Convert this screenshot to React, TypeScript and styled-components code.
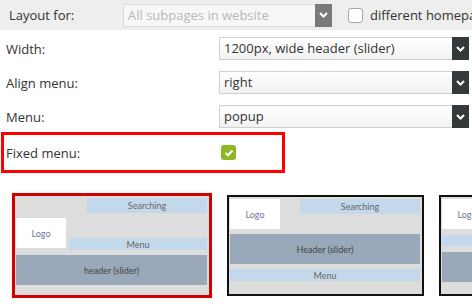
import React from "react";
import styled, { createGlobalStyle } from "styled-components";

const Global = createGlobalStyle`
  html, body { margin: 0; padding: 0; background: #fff; overflow: hidden; }
  body { font-family: "Open Sans", "Liberation Sans", sans-serif; font-size: 13px; color: #333; }
`;

const Page = styled.div`
  width: 472px;
  height: 307px;
  overflow: hidden;
`;

const TopBar = styled.div`
  display: flex;
  align-items: center;
  height: 30px;
  padding-left: 9px;
  background: #eeeeee;
  white-space: nowrap;
`;

const TopLabel = styled.div`
  width: 114px;
  flex: none;
`;

const Select = styled.div<{ $w: number; $disabled?: boolean }>`
  display: flex;
  flex: none;
  width: ${(p) => p.$w}px;
  height: 23px;
  box-sizing: border-box;
  border: 1px solid ${(p) => (p.$disabled ? "#dcdcdc" : "#d0d0d0")};
  border-right: none;
  background: ${(p) => (p.$disabled ? "#f7f7f7" : "linear-gradient(#ffffff, #f2f2f2)")};
  color: ${(p) => (p.$disabled ? "#b8b8b8" : "#333")};
`;

const SelectText = styled.div`
  flex: 1;
  padding-left: 4px;
  line-height: 21px;
  overflow: hidden;
  white-space: nowrap;
`;

const Arrow = styled.div<{ $disabled?: boolean }>`
  flex: none;
  width: 17px;
  margin: -1px 0;
  display: flex;
  align-items: center;
  justify-content: center;
  background: ${(p) => (p.$disabled ? "#7a7a7a" : "#343a3c")};
`;

const CheckBox = styled.div<{ $checked?: boolean }>`
  flex: none;
  width: 15px;
  height: 15px;
  box-sizing: border-box;
  border-radius: 3px;
  display: flex;
  align-items: center;
  justify-content: center;
  background: ${(p) => (p.$checked ? "#8db724" : "#fff")};
  border: ${(p) => (p.$checked ? "none" : "1.5px solid #a8a8a8")};
`;

const TopCheck = styled(CheckBox)`
  margin-left: 16px;
  margin-right: 7px;
`;

const Rows = styled.div`
  display: flex;
  flex-direction: column;
  gap: 11px;
  padding-top: 7px;
`;

const Row = styled.div`
  display: flex;
  align-items: center;
  height: 23px;
  padding-left: 6px;
`;

const Label = styled.div`
  width: 213px;
  flex: none;
`;

const Highlight = styled.div`
  display: flex;
  align-items: center;
  width: 284px;
  height: 41px;
  box-sizing: border-box;
  margin: 4px 0 0 1px;
  padding-left: 2px;
  border: 3px solid #ff0000;
`;

const FixedCheck = styled(CheckBox)`
  margin-left: 2px;
`;

const Previews = styled.div`
  display: flex;
  align-items: center;
  gap: 15px;
  margin-top: 20px;
  padding-left: 12px;
`;

const Thumb = styled.div<{ $selected?: boolean }>`
  flex: none;
  box-sizing: content-box;
  width: ${(p) => (p.$selected ? 191 : 190)}px;
  height: ${(p) => (p.$selected ? 97 : 95)}px;
  padding: ${(p) => (p.$selected ? "1px 2px 1px 1px" : "2px 2px 0 1px")};
  background: #dddddd;
  border: ${(p) => (p.$selected ? "3px solid #d40000" : "2px solid #111")};
  display: flex;
  flex-direction: column;
  font-family: Lato, "Liberation Sans", sans-serif;
  font-size: 9px;
  color: #555;
`;

const Block = styled.div<{ $kind: "light" | "logo" | "header"; $h: number; $w?: number }>`
  flex: none;
  height: ${(p) => p.$h}px;
  ${(p) => (p.$w ? `width: ${p.$w}px;` : "")}
  display: flex;
  align-items: center;
  justify-content: center;
  background: ${(p) =>
    p.$kind === "light" ? "#c4d8ec" : p.$kind === "logo" ? "#ffffff" : "#99a9b9"};
  color: ${(p) => (p.$kind === "logo" ? "#6b7894" : p.$kind === "header" ? "#444" : "#666")};
  white-space: nowrap;
`;

const Line = styled.div<{ $mt?: number; $align?: string }>`
  display: flex;
  align-items: ${(p) => p.$align || "flex-start"};
  justify-content: space-between;
  gap: 3px;
  margin-top: ${(p) => p.$mt || 0}px;
`;

const Stack = styled.div<{ $mt?: number }>`
  display: flex;
  flex-direction: column;
  margin-top: ${(p) => p.$mt || 0}px;
`;

const Grow = styled.div`
  flex: 1;
  display: flex;
`;

const Chevron = () => (
  <svg width="9" height="6" viewBox="0 0 9 6">
    <path d="M1 1 L4.5 4.5 L8 1" fill="none" stroke="#fff" strokeWidth="2" />
  </svg>
);

const Tick = () => (
  <svg width="10" height="8" viewBox="0 0 10 8">
    <path d="M1.5 4 L4 6.3 L8.5 1.5" fill="none" stroke="#fff" strokeWidth="2" />
  </svg>
);

export default function App() {
  return (
    <Page>
      <Global />
      <TopBar>
        <TopLabel>Layout for:</TopLabel>
        <Select $w={209} $disabled>
          <SelectText>All subpages in website</SelectText>
          <Arrow $disabled>
            <Chevron />
          </Arrow>
        </Select>
        <TopCheck />
        <span>different homepage</span>
      </TopBar>
      <Rows>
        <Row>
          <Label>Width:</Label>
          <Select $w={250}>
            <SelectText>1200px, wide header (slider)</SelectText>
            <Arrow>
              <Chevron />
            </Arrow>
          </Select>
        </Row>
        <Row>
          <Label>Align menu:</Label>
          <Select $w={250}>
            <SelectText>right</SelectText>
            <Arrow>
              <Chevron />
            </Arrow>
          </Select>
        </Row>
        <Row>
          <Label>Menu:</Label>
          <Select $w={250}>
            <SelectText>popup</SelectText>
            <Arrow>
              <Chevron />
            </Arrow>
          </Select>
        </Row>
      </Rows>
      <Highlight>
        <Label>Fixed menu:</Label>
        <FixedCheck $checked>
          <Tick />
        </FixedCheck>
      </Highlight>
      <Previews>
        <Thumb $selected>
          <Line $mt={1} style={{ justifyContent: "flex-end" }}>
            <Block $kind="light" $h={15} $w={120}>Searching</Block>
          </Line>
          <Line $mt={5} $align="flex-end">
            <Block $kind="logo" $h={30} $w={50} style={{ marginBottom: 2 }}>Logo</Block>
            <Grow>
              <Block $kind="light" $h={12} style={{ flex: 1 }}>Menu</Block>
            </Grow>
          </Line>
          <Stack $mt={5}>
            <Block $kind="header" $h={30}>header (slider)</Block>
          </Stack>
        </Thumb>
        <Thumb>
          <Line>
            <Block $kind="logo" $h={30} $w={50}>Logo</Block>
            <Block $kind="light" $h={15} $w={120}>Searching</Block>
          </Line>
          <Stack $mt={5}>
            <Block $kind="header" $h={30}>Header (slider)</Block>
          </Stack>
          <Stack $mt={5}>
            <Block $kind="light" $h={12}>Menu</Block>
          </Stack>
        </Thumb>
        <Thumb>
          <Line>
            <Block $kind="logo" $h={30} $w={50}>Logo</Block>
            <Block $kind="light" $h={15} $w={120}>Searching</Block>
          </Line>
          <Stack $mt={6}>
            <Block $kind="light" $h={11}>Menu</Block>
          </Stack>
          <Stack $mt={6}>
            <Block $kind="header" $h={30}>Header (slider)</Block>
          </Stack>
        </Thumb>
      </Previews>
    </Page>
  );
}
